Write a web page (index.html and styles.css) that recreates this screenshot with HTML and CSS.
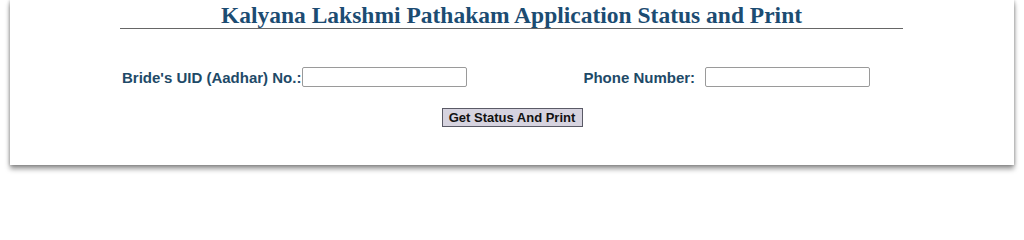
FILE: index.html
```html
<!DOCTYPE html>
<html>
<head>
<meta charset="utf-8">
<link rel="stylesheet" href="styles.css">
</head>
<body>
<div class="card">
  <div class="title-wrap">
    <h1 class="title">Kalyana Lakshmi Pathakam Application Status and Print</h1>
  </div>
  <div class="form-row">
    <label class="label label-uid">Bride's UID (Aadhar) No.:</label>
    <input class="field" type="text">
    <label class="label label-phone">Phone Number:</label>
    <input class="field" type="text">
  </div>
  <div class="btn-row">
    <button class="btn">Get Status And Print</button>
  </div>
</div>
</body>
</html>
```
FILE: styles.css
```css
html, body {
  margin: 0;
  padding: 0;
  background: #ffffff;
}
body {
  padding: 0 10px;
  height: 202px;
  box-sizing: border-box;
}
.card {
  background: #ffffff;
  height: 165px;
  box-shadow: 0 4px 5px rgba(0,0,0,0.4), -1px 0 3px rgba(0,0,0,0.15), 1px 0 3px rgba(0,0,0,0.15);
  padding-top: 3px;
  box-sizing: border-box;
}
.title-wrap {
  width: 783px;
  margin-left: 110px;
  border-bottom: 1px solid #666666;
  text-align: center;
  height: 25px;
}
.title {
  margin: 0;
  font-family: "Liberation Serif", "Times New Roman", serif;
  font-weight: bold;
  font-size: 23.5px;
  line-height: 24px;
  color: #1c4c72;
}
.form-row {
  display: flex;
  align-items: center;
  margin-top: 37px;
  padding-left: 112px;
  height: 22px;
}
.label {
  font-family: "Liberation Sans", Arial, sans-serif;
  font-weight: bold;
  font-size: 15px;
  color: #1e4a68;
}
.label-uid {
  margin-right: 1px;
}
.label-phone {
  margin-left: 116px;
  margin-right: 10px;
}
.field {
  width: 165px;
  height: 20px;
  box-sizing: border-box;
  border: 1px solid #9a9a9a;
  border-radius: 2px;
  padding: 0 3px;
  margin: 0;
  background: #ffffff;
}
.btn-row {
  display: flex;
  justify-content: center;
  margin-top: 20px;
  padding-left: 0;
}
.btn {
  font-family: "Liberation Sans", Arial, sans-serif;
  font-weight: bold;
  font-size: 13px;
  color: #111111;
  background: #d6d3df;
  border: 1px solid #5a5a66;
  height: 19px;
  width: 141px;
  padding: 0;
  margin: 0;
  border-radius: 0;
}
```
